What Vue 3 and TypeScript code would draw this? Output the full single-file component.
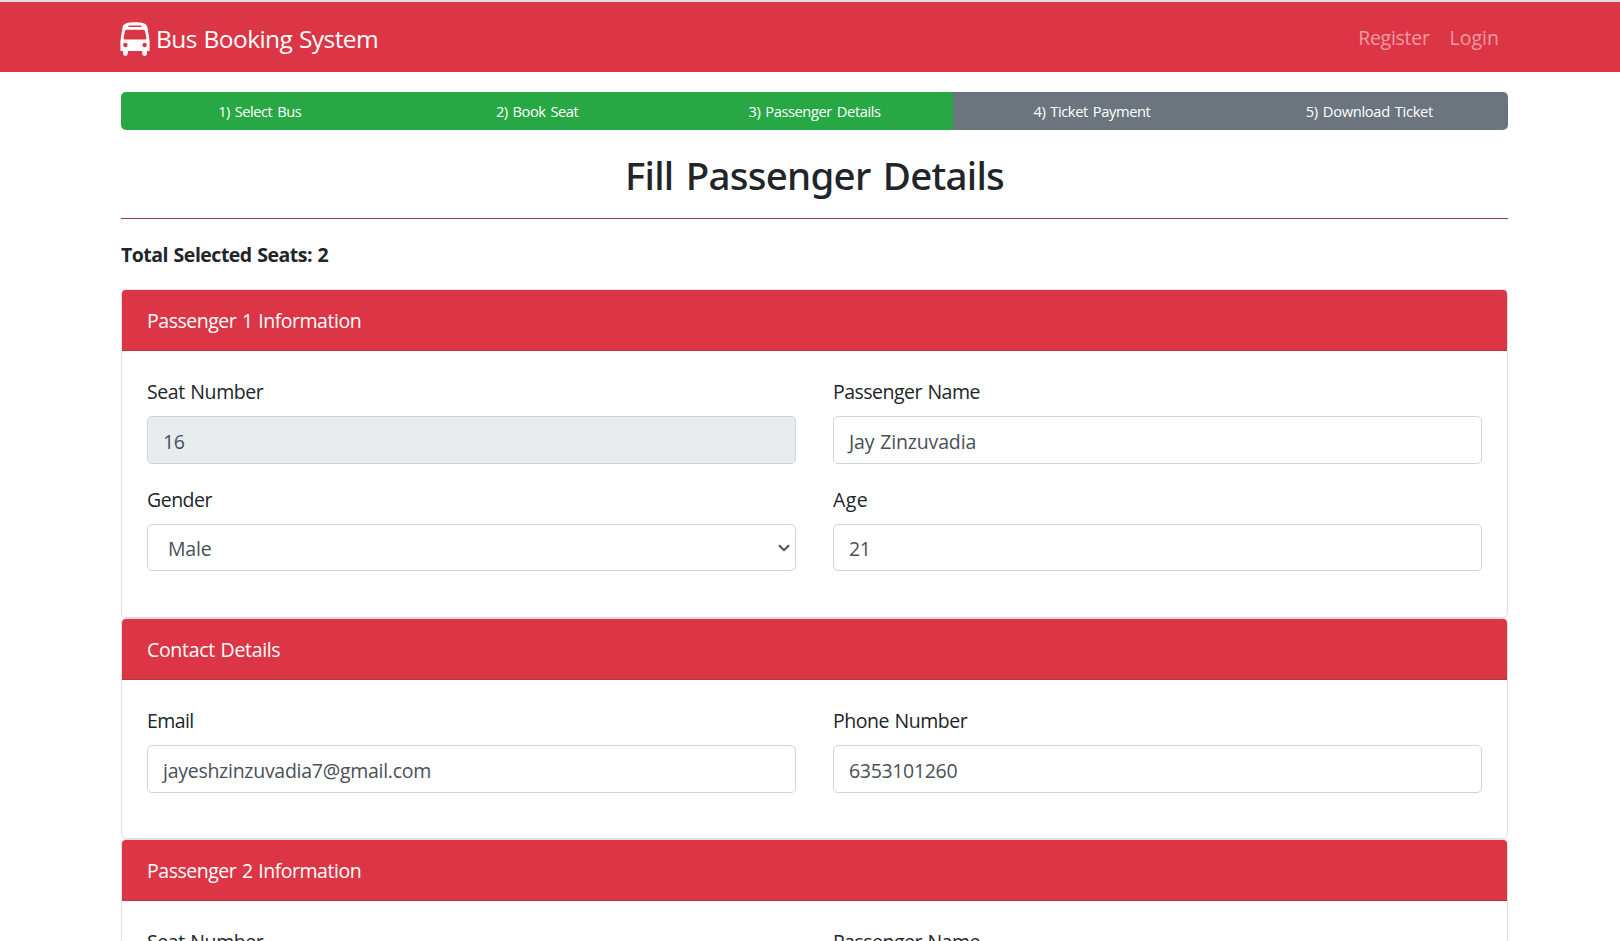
<script setup lang="ts">
interface Label {
  text: string
  spacing: number
}
interface Field {
  label: Label
  value: Label
  kind: 'text' | 'readonly' | 'select'
}
interface Section {
  title: Label
  fields: Field[]
}

const t = (text: string, spacing = -0.47): Label => ({ text, spacing })

const steps = [
  { label: t('1) Select Bus', -0.48), done: true },
  { label: t('2) Book Seat', -0.46), done: true },
  { label: t('3) Passenger Details', -0.42), done: true },
  { label: t('4) Ticket Payment', -0.4), done: false },
  { label: t('5) Download Ticket', -0.32), done: false },
]

const links = [t('Register', -0.28), t('Login', 0)]

const sections: Section[] = [
  {
    title: t('Passenger 1 Information'),
    fields: [
      { label: t('Seat Number', -0.43), value: t('16', -0.5), kind: 'readonly' },
      { label: t('Passenger Name', -0.52), value: t('Jay Zinzuvadia', -0.16), kind: 'text' },
      { label: t('Gender', -0.5), value: t('Male', -0.2), kind: 'select' },
      { label: t('Age', 0.4), value: t('21', -0.5), kind: 'text' },
    ],
  },
  {
    title: t('Contact Details', -0.32),
    fields: [
      { label: t('Email', -0.6), value: t('jayeshzinzuvadia7@gmail.com', -0.27), kind: 'text' },
      { label: t('Phone Number', -0.48), value: t('6353101260', -0.33), kind: 'text' },
    ],
  },
  {
    title: t('Passenger 2 Information'),
    fields: [
      { label: t('Seat Number', -0.43), value: t('', 0), kind: 'readonly' },
      { label: t('Passenger Name', -0.52), value: t('', 0), kind: 'text' },
    ],
  },
]

const tracking = (l: Label) => ({ letterSpacing: `${l.spacing}px` })
</script>

<template>
  <div class="page">
    <nav class="navbar">
      <a class="brand">
        <svg class="bus" viewBox="0 0 30 34" aria-hidden="true">
          <path
            fill="#fff"
            fill-rule="evenodd"
            d="M6.500 1.300C11 -.1 19 -.1 23.500 1.300C26 2.100 27.200 3.500 27.600 6L29.600 19V29H27V31.500A2.400 2.400 0 0 1 22.200 31.500V29H7.800V31.500A2.400 2.400 0 0 1 3 31.500V29H.4V19L2.400 6C2.800 3.500 4 2.100 6.500 1.300ZM9 3.400A.8.8 0 0 0 9 5H21A.8.8 0 0 0 21 3.400ZM6.600 7.800Q5.300 7.800 5 9.200L3.500 16.000Q3.300 17.500 4.800 17.500H25.200Q26.700 17.500 26.500 16.000L25 9.200Q24.700 7.800 23.400 7.800ZM5.400 20.800A2.200 2.200 0 1 0 5.400 25.200A2.200 2.200 0 1 0 5.400 20.800ZM24.600 20.800A2.200 2.200 0 1 0 24.600 25.200A2.200 2.200 0 1 0 24.600 20.800Z"
          />
        </svg>
        <span>Bus Booking System</span>
      </a>
      <div class="links">
        <a v-for="l in links" :key="l.text" :style="tracking(l)">{{ l.text }}</a>
      </div>
    </nav>

    <main class="container">
      <div class="steps">
        <div v-for="s in steps" :key="s.label.text" class="step" :class="{ done: s.done }">
          <span :style="tracking(s.label)">{{ s.label.text }}</span>
        </div>
      </div>

      <h1>Fill Passenger Details</h1>
      <hr />
      <p class="total">Total Selected Seats: 2</p>

      <section v-for="(s, i) in sections" :key="i" class="card">
        <header :style="tracking(s.title)">{{ s.title.text }}</header>
        <div class="body">
          <div v-for="f in s.fields" :key="f.label.text" class="field">
            <label :style="tracking(f.label)">{{ f.label.text }}</label>
            <div class="control" :class="f.kind">
              <span :style="tracking(f.value)">{{ f.value.text }}</span>
              <svg v-if="f.kind === 'select'" class="chevron" viewBox="0 0 12 8" aria-hidden="true">
                <path d="M1 1.200L6 6.200L11 1.200" fill="none" stroke="#495057" stroke-width="2" />
              </svg>
            </div>
          </div>
        </div>
      </section>
    </main>
  </div>
</template>

<style scoped>
.page {
  height: 941px;
  overflow: hidden;
  background: #fff;
  color: #212529;
  font-family: "Open Sans", "Noto Sans", sans-serif;
  font-size: 19.5px;
  line-height: 30px;
  word-spacing: 1px;
}
.navbar {
  box-sizing: border-box;
  height: 72px;
  border-top: 2px solid #dedede;
  padding: 0 112px 0 120px;
  display: flex;
  align-items: center;
  justify-content: space-between;
  background: #dc3545;
  color: #fff;
}
.brand {
  display: flex;
  align-items: center;
  gap: 6px;
  padding-top: 4px;
  font-size: 24.5px;
  letter-spacing: -0.58px;
}
.brand span {
  margin-top: -1px;
}
.bus {
  width: 30px;
  height: 34px;
}
.links {
  display: flex;
  gap: 20px;
  padding: 2px 9px 0 0;
  color: rgba(255, 255, 255, 0.5);
}
.container {
  width: 1387px;
  margin-left: 121px;
}
.steps {
  display: flex;
  height: 38px;
  margin-top: 20px;
  border-radius: 5px;
  overflow: hidden;
}
.step {
  flex: 1;
  display: flex;
  align-items: center;
  justify-content: center;
  background: #6c757d;
  color: #fff;
  font-size: 14.7px;
  word-spacing: 1.5px;
}
.step.done {
  background: #28a745;
}
h1 {
  margin: 21px 0 0;
  font: 500 38.5px/48px "Noto Sans", "Open Sans", sans-serif;
  letter-spacing: -0.74px;
  word-spacing: 3px;
  text-align: center;
}
hr {
  margin: 19px 0 21px;
  border: 0;
  height: 1px;
  background: #9c3e4a;
}
.total {
  margin: 0 0 19px;
  font-weight: 700;
  letter-spacing: -0.5px;
}
.card {
  box-sizing: border-box;
  border: 1px solid #dfdfdf;
  border-radius: 5px;
}
.card header {
  height: 60px;
  padding: 0 25px;
  border-bottom: 1px solid #b53445;
  border-radius: 4px 4px 0 0;
  background: #dc3545;
  color: #fff;
  line-height: 62px;
}
.body {
  display: grid;
  grid-template-columns: 1fr 1fr;
  column-gap: 37px;
  padding: 26px 25px 25px;
}
.field {
  margin-bottom: 20px;
}
.field:nth-child(n + 3) {
  margin: 1px 0 21px;
}
label {
  display: block;
  height: 30px;
  margin-bottom: 9px;
}
.control {
  box-sizing: border-box;
  height: 48px;
  padding: 4px 15px 0;
  border: 1px solid #ced4da;
  border-radius: 5px;
  display: flex;
  align-items: center;
  color: #495057;
}
.readonly {
  background: #e9ecef;
}
.select {
  height: 47px;
  padding: 3px 5px 0 20px;
  justify-content: space-between;
}
.field:has(.select) + .field .control {
  height: 47px;
  padding-top: 3px;
}
.chevron {
  width: 12px;
  height: 8px;
  margin-top: -3px;
}
</style>

<style>
body {
  margin: 0;
  overflow: hidden;
}
</style>
